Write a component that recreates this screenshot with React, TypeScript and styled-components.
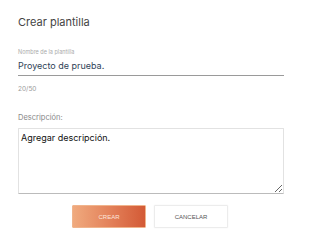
import React, { useState } from 'react';
import styled, { createGlobalStyle } from 'styled-components';

const GlobalStyle = createGlobalStyle`
  html, body {
    margin: 0;
    padding: 0;
    background: #fff;
  }
  body {
    font-family: Inter, 'Open Sans', sans-serif;
  }
`;

const MAX_NAME = 50;

const App = () => {
  const [name, setName] = useState('Proyecto de prueba. ');
  const [description, setDescription] = useState('Agregar descripción.');

  return (
    <>
      <GlobalStyle />
      <Dialog>
        <Title>Crear plantilla</Title>
        <Field>
          <SmallLabel>Nombre de la plantilla</SmallLabel>
          <NameInput value={name} maxLength={MAX_NAME} onChange={e => setName(e.target.value)} />
          <Counter>
            {name.length}/{MAX_NAME}
          </Counter>
        </Field>
        <Label>Descripción:</Label>
        <TextArea value={description} onChange={e => setDescription(e.target.value)} />
        <Actions>
          <Button primary>Crear</Button>
          <Button>Cancelar</Button>
        </Actions>
      </Dialog>
    </>
  );
};

export default App;

const Dialog = styled.div`
  width: 300px;
  height: 240px;
  box-sizing: border-box;
  padding: 16px 16px 0 18px;
  display: flex;
  flex-direction: column;
`;

const Title = styled.h1`
  margin: 0;
  font-size: 11px;
  font-weight: 400;
  color: #444;
  line-height: 13px;
`;

const Field = styled.div`
  display: flex;
  flex-direction: column;
  margin-top: 20px;
`;

const SmallLabel = styled.label`
  font-size: 5.5px;
  color: #aaa;
  line-height: 7px;
`;

const NameInput = styled.input`
  border: none;
  border-bottom: 1px solid #9a9a9a;
  outline: none;
  padding: 0 0 3px;
  margin-top: 4px;
  font-family: inherit;
  font-size: 9px;
  line-height: 12px;
  color: #2f4358;
  background: transparent;
`;

const Counter = styled.span`
  margin-top: 9px;
  font-size: 6.5px;
  color: #999;
  line-height: 9px;
`;

const Label = styled.label`
  margin-top: 19px;
  font-size: 7.5px;
  color: #888;
  line-height: 10px;
`;

const TextArea = styled.textarea`
  margin-top: 5px;
  height: 66px;
  box-sizing: border-box;
  border: 1px solid #e2e2e2;
  border-bottom-color: #bbb;
  border-radius: 1px;
  padding: 3px 2px;
  font-family: inherit;
  font-size: 9px;
  color: #111;
  outline: none;
  resize: vertical;
`;

const Actions = styled.div`
  display: flex;
  justify-content: center;
  gap: 8px;
  margin-top: 11px;
  padding-right: 2px;
`;

const Button = styled.button<{ primary?: boolean }>`
  width: 74px;
  height: 23px;
  box-sizing: border-box;
  font-family: 'Liberation Sans', Arial, sans-serif;
  font-size: 6px;
  text-transform: uppercase;
  cursor: pointer;
  border-radius: 1px;
  border: 1px solid ${p => (p.primary ? '#f0b48c' : '#ececec')};
  background: ${p => (p.primary ? 'linear-gradient(90deg, #f0aa7e 0%, #e27e57 55%, #d35a36 100%)' : '#fff')};
  color: ${p => (p.primary ? '#fde6dc' : '#555')};
  box-shadow: ${p => (p.primary ? 'none' : '0 0 2px rgba(0,0,0,0.06)')};
`;
